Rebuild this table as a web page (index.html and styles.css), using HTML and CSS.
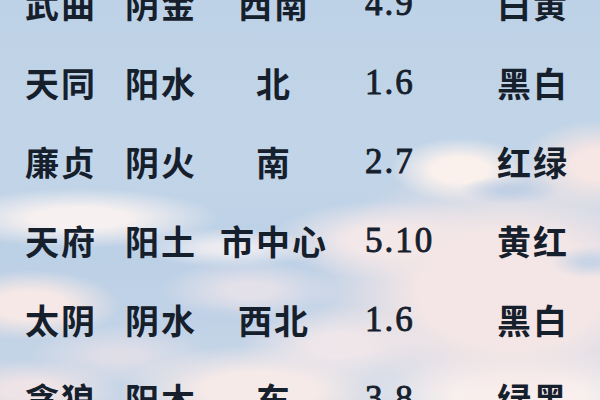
FILE: index.html
```html
<!DOCTYPE html>
<html lang="zh">
<head>
<meta charset="utf-8">
<link rel="stylesheet" href="styles.css">
</head>
<body>
<div class="sky">
  <div class="table">
    <div class="row"><span class="c1">武曲</span><span class="c2">阴金</span><span class="c3">西南</span><span class="c4">4.9</span><span class="c5">白黄</span></div>
    <div class="row"><span class="c1">天同</span><span class="c2">阳水</span><span class="c3">北</span><span class="c4">1.6</span><span class="c5">黑白</span></div>
    <div class="row"><span class="c1">廉贞</span><span class="c2">阴火</span><span class="c3">南</span><span class="c4">2.7</span><span class="c5">红绿</span></div>
    <div class="row"><span class="c1">天府</span><span class="c2">阳土</span><span class="c3">市中心</span><span class="c4">5.10</span><span class="c5">黄红</span></div>
    <div class="row"><span class="c1">太阴</span><span class="c2">阴水</span><span class="c3">西北</span><span class="c4">1.6</span><span class="c5">黑白</span></div>
    <div class="row"><span class="c1">贪狼</span><span class="c2">阳木</span><span class="c3">东</span><span class="c4">3.8</span><span class="c5">绿黑</span></div>
  </div>
</div>
</body>
</html>
```
FILE: styles.css
```css
html, body {
  margin: 0;
  padding: 0;
  width: 600px;
  height: 400px;
  overflow: hidden;
}
.sky {
  width: 600px;
  height: 400px;
  overflow: hidden;
  background:
    radial-gradient(ellipse 50px 14px at 510px 190px, rgba(190,206,228,0.9) 20%, rgba(190,206,228,0) 100%),
    radial-gradient(ellipse 40px 16px at 590px 262px, rgba(196,210,230,0.9) 20%, rgba(196,210,230,0) 100%),
    radial-gradient(ellipse 60px 14px at 200px 318px, rgba(192,208,230,0.9) 20%, rgba(192,208,230,0) 100%),
    radial-gradient(ellipse 70px 32px at 460px 170px, rgba(250,240,236,1) 40%, rgba(250,240,236,0) 100%),
    radial-gradient(ellipse 80px 45px at 600px 165px, rgba(246,230,228,1) 35%, rgba(246,230,228,0) 100%),
    radial-gradient(ellipse 200px 130px at 510px 290px, rgba(244,230,230,1) 45%, rgba(244,230,230,0) 100%),
    radial-gradient(ellipse 120px 40px at 390px 240px, rgba(242,232,234,1) 35%, rgba(242,232,234,0) 100%),
    radial-gradient(ellipse 140px 30px at 80px 218px, rgba(246,240,240,1) 35%, rgba(246,240,240,0) 100%),
    radial-gradient(ellipse 90px 20px at 230px 248px, rgba(240,238,242,0.9) 25%, rgba(240,238,242,0) 100%),
    radial-gradient(ellipse 90px 35px at 30px 305px, rgba(246,232,230,1) 40%, rgba(246,232,230,0) 100%),
    radial-gradient(ellipse 90px 30px at 250px 290px, rgba(236,228,234,0.8) 25%, rgba(236,228,234,0) 100%),
    radial-gradient(ellipse 100px 40px at 340px 345px, rgba(242,232,234,0.9) 30%, rgba(242,232,234,0) 100%),
    radial-gradient(ellipse 140px 45px at 260px 390px, rgba(246,234,232,1) 40%, rgba(246,234,232,0) 100%),
    radial-gradient(ellipse 160px 50px at 520px 395px, rgba(250,242,240,1) 40%, rgba(250,242,240,0) 100%),
    radial-gradient(ellipse 90px 30px at 30px 390px, rgba(240,228,230,0.95) 30%, rgba(240,228,230,0) 100%),
    radial-gradient(ellipse 90px 30px at 120px 355px, rgba(234,226,232,0.7) 20%, rgba(234,226,232,0) 100%),
    linear-gradient(180deg, #bed2e7 0%, #c2d5e8 40%, #bcd0e6 65%, #c8d6e7 100%);
}
.table {
  margin-top: -36px;
  display: flex;
  flex-direction: column;
  color: #16202c;
  font-family: "Noto Sans CJK SC", "Noto Sans CJK TC", sans-serif;
  font-weight: 700;
  font-size: 34px;
}
.row {
  display: grid;
  grid-template-columns: 25px 100px 94px 110px 36px 132px 1fr;
  height: 79px;
  align-items: center;
}
.row > span { line-height: 1; letter-spacing: 2px; }
.c1 { grid-column: 2; }
.c2 { grid-column: 3; }
.c3 { grid-column: 4; text-align: center; letter-spacing: 1px; }
.c4 {
  grid-column: 6;
  font-family: "Liberation Serif", serif;
  font-weight: 400;
  font-size: 35px;
  letter-spacing: -1px;
  -webkit-text-stroke: 0.9px #16202c;
}
.c5 { grid-column: 7; }
```
